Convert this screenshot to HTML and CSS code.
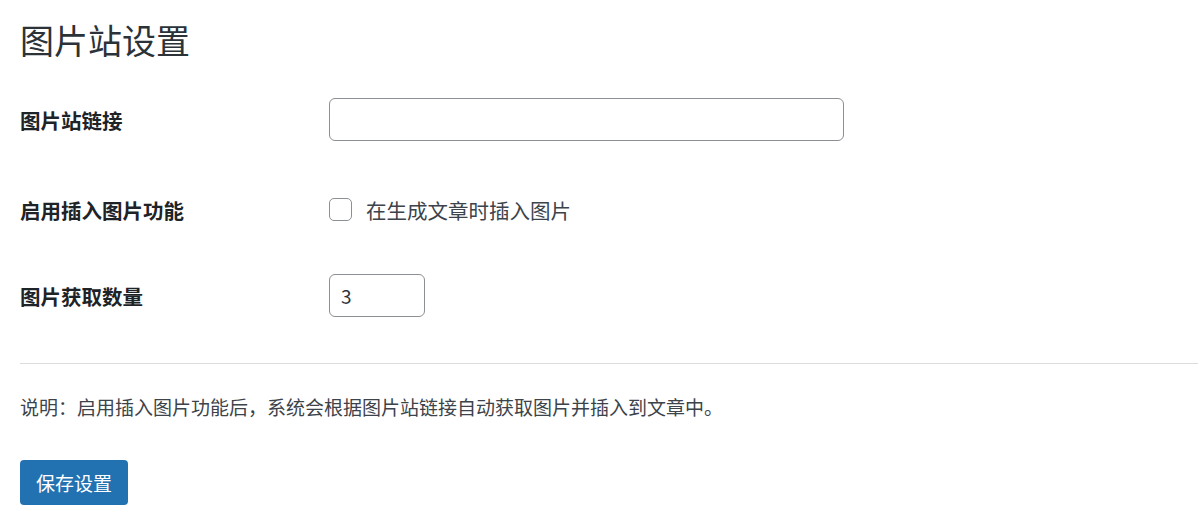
FILE: index.html
```html
<!DOCTYPE html>
<html lang="zh-CN">
<head>
<meta charset="utf-8">
<title>图片站设置</title>
<link rel="stylesheet" href="styles.css">
</head>
<body>
<div class="wrap">
  <h1 class="page-title">图片站设置</h1>
  <form class="settings">
    <div class="row row-link">
      <label class="row-label" for="site">图片站链接</label>
      <div class="row-field"><input id="site" class="text-input wide" type="text"></div>
    </div>
    <div class="row row-check">
      <span class="row-label">启用插入图片功能</span>
      <label class="row-field check-field"><span class="checkbox"></span><span class="check-text">在生成文章时插入图片</span></label>
    </div>
    <div class="row row-count">
      <label class="row-label" for="count">图片获取数量</label>
      <div class="row-field"><input id="count" class="text-input small" type="text" value="3"></div>
    </div>
    <hr class="divider">
    <p class="note">说明：启用插入图片功能后，系统会根据图片站链接自动获取图片并插入到文章中。</p>
    <button type="button" class="btn-primary">保存设置</button>
  </form>
</div>
</body>
</html>
```
FILE: styles.css
```css
html, body {
  margin: 0;
  padding: 0;
  background: #ffffff;
}
body {
  font-family: "Noto Sans CJK SC", "Microsoft YaHei", "Noto Sans", sans-serif;
  color: #1d2327;
}
.wrap {
  padding: 18px 0 0 20px;
}
.page-title {
  margin: 0;
  font-size: 34px;
  line-height: 43px;
  font-weight: 400;
  color: #2c3338;
}
.settings {
  display: flex;
  flex-direction: column;
}
.row {
  display: flex;
  align-items: center;
}
.row-link {
  margin-top: 37px;
  height: 43px;
}
.row-check {
  margin-top: 51px;
  height: 35px;
}
.row-count {
  margin-top: 47px;
  height: 43px;
}
.row-label {
  width: 309px;
  flex: none;
  font-size: 20.5px;
  line-height: 28px;
  font-weight: 700;
  color: #1d2327;
}
.row-field {
  display: flex;
  align-items: center;
}
.text-input {
  box-sizing: border-box;
  height: 43px;
  border: 1.5px solid #8c8f94;
  border-radius: 6px;
  background: #fff;
  font-family: "Noto Sans CJK SC", "Noto Sans", sans-serif;
  font-size: 19px;
  color: #2c3338;
  padding: 0 11px;
  outline: none;
}
.wide { width: 515px; }
.small { width: 96px; }
.check-field {
  gap: 14px;
}
.checkbox {
  box-sizing: border-box;
  width: 23px;
  height: 23px;
  border: 1.5px solid #8c8f94;
  border-radius: 5px;
  background: #fff;
}
.check-text {
  font-size: 20.5px;
  line-height: 28px;
  color: #3c434a;
}
.divider {
  margin: 46px 0 0 0;
  border: 0;
  border-top: 1px solid #dcdcde;
  height: 0;
}
.note {
  margin: 29px 0 0 0;
  font-size: 19px;
  line-height: 27px;
  color: #3c434a;
}
.btn-primary {
  align-self: flex-start;
  margin-top: 40px;
  height: 45px;
  width: 108px;
  padding: 0;
  border: 0;
  border-radius: 4px;
  background: #2271b1;
  color: #fff;
  font-family: "Noto Sans CJK SC", "Noto Sans", sans-serif;
  font-size: 19px;
  line-height: 45px;
}
```
